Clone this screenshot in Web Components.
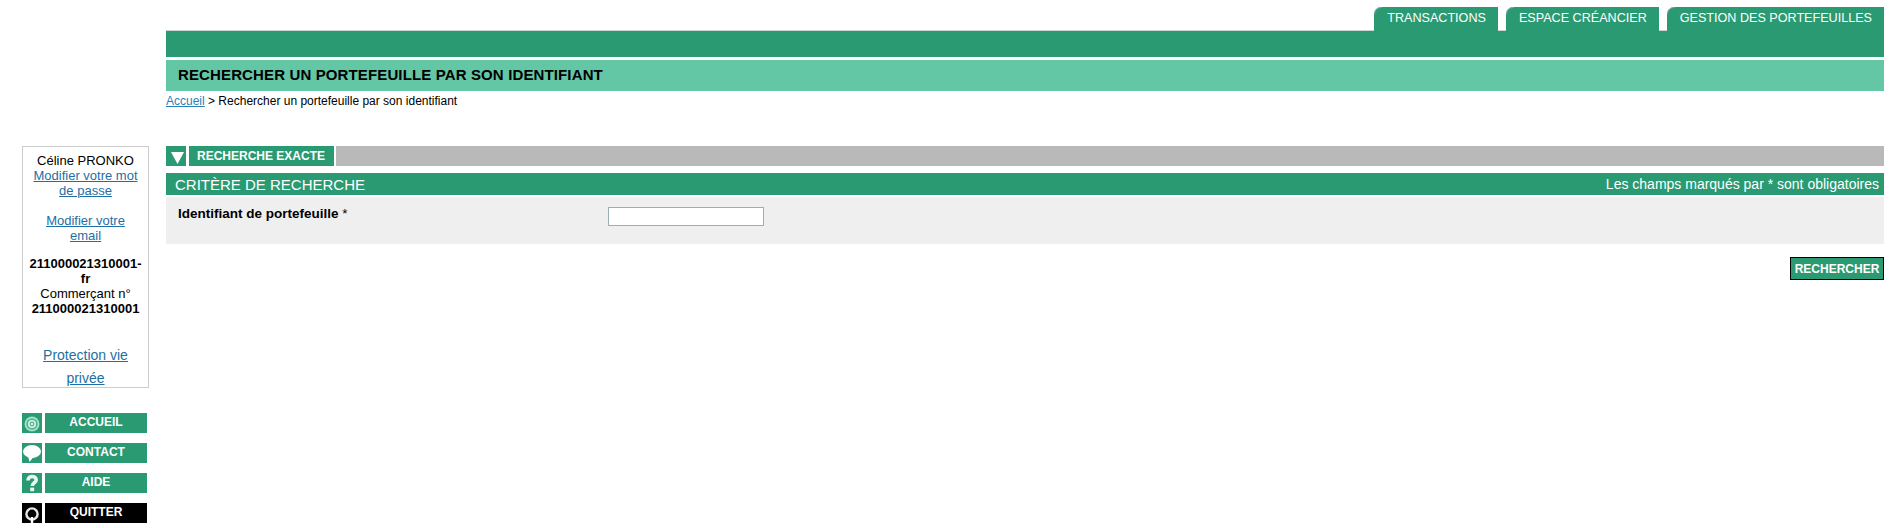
<!DOCTYPE html>
<html lang="fr">
<head>
<meta charset="utf-8">
<title>Rechercher un portefeuille</title>
<style>
  html, body { margin: 0; padding: 0; background: #fff; }
  body { font-family: "Liberation Sans", Arial, sans-serif; font-size: 12px; color: #000; }
</style>
</head>
<body>
<app-shell>
  <user-card slot="side"></user-card>
  <side-button slot="side" icon="target">ACCUEIL</side-button>
  <side-button slot="side" icon="bubble">CONTACT</side-button>
  <side-button slot="side" icon="help">AIDE</side-button>
  <side-button slot="side" icon="quit" dark>QUITTER</side-button>

  <top-tabs slot="head"></top-tabs>
  <page-title slot="head">RECHERCHER UN PORTEFEUILLE PAR SON IDENTIFIANT</page-title>

  <search-form></search-form>
</app-shell>

<script>
const GREEN = '#2a9a72';

class AppShell extends HTMLElement {
  constructor() {
    super();
    this.attachShadow({ mode: 'open' });
    this.shadowRoot.innerHTML = `
      <style>
        :host { display: grid; grid-template-columns: 166px 1718px; grid-template-rows: 146px auto; height: 528px; overflow: hidden; }
        .head { grid-column: 2; grid-row: 1; }
        .side { grid-column: 1; grid-row: 2; padding-left: 22px; display: flex; flex-direction: column; }
        .main { grid-column: 2; grid-row: 2; }
      </style>
      <div class="head"><slot name="head"></slot></div>
      <div class="side"><slot name="side"></slot></div>
      <div class="main"><slot></slot></div>
    `;
  }
}

class TopTabs extends HTMLElement {
  constructor() {
    super();
    this.attachShadow({ mode: 'open' });
    this.shadowRoot.innerHTML = `
      <style>
        :host { display: block; padding-top: 7px; }
        .tabs { display: flex; justify-content: flex-end; gap: 8px; height: 24px; margin-bottom: -1px; position: relative; }
        .tab {
          position: relative; background: ${GREEN}; color: #fff; border-top-left-radius: 8px;
          padding: 3px 12px 0 13px; font-size: 12.6px; line-height: 17px; white-space: nowrap;
        }
        .tab::before {
          content: ""; position: absolute; left: 0; top: 0; width: 8px; height: 7px;
          border-top: 1px solid #7d9fb8; border-left: 1px solid #7d9fb8; border-top-left-radius: 8px;
          box-sizing: border-box;
        }
        .bar { height: 27px; box-sizing: border-box; background: ${GREEN}; border-top: 1px solid #c9d6d2; }
      </style>
      <div class="tabs">
        <div class="tab">TRANSACTIONS</div>
        <div class="tab">ESPACE CRÉANCIER</div>
        <div class="tab">GESTION DES PORTEFEUILLES</div>
      </div>
      <div class="bar"></div>
    `;
  }
}

class PageTitle extends HTMLElement {
  constructor() {
    super();
    this.attachShadow({ mode: 'open' });
    this.shadowRoot.innerHTML = `
      <style>
        :host { display: block; margin-top: 3px; }
        h1 {
          margin: 0; height: 31px; line-height: 30px; padding-left: 12px;
          background: #63c7a5; font-size: 15px; font-weight: bold; letter-spacing: .13px;
        }
        nav { font-size: 12px; line-height: 15px; margin-top: 3px; }
        a { color: #2a7fb8; }
      </style>
      <h1><slot></slot></h1>
      <nav><a href="#">Accueil</a> &gt; Rechercher un portefeuille par son identifiant</nav>
    `;
  }
}

class UserCard extends HTMLElement {
  constructor() {
    super();
    this.attachShadow({ mode: 'open' });
    this.shadowRoot.innerHTML = `
      <style>
        :host {
          display: block; box-sizing: border-box; width: 127px; height: 242px;
          border: 1px solid #ccc; padding: 6px 0 0; text-align: center;
          font-size: 13px; line-height: 15px; overflow: hidden; white-space: nowrap;
        }
        a { color: #1d6fa5; }
        p { margin: 0 0 15px; }
        .mail { margin-bottom: 13px; }
        .id { margin-bottom: 28px; }
        .privacy { font-size: 14px; line-height: 23px; margin: 0; }
      </style>
      <p>Céline PRONKO<br><a href="#">Modifier votre mot<br>de passe</a></p>
      <p class="mail"><a href="#">Modifier votre<br>email</a></p>
      <p class="id"><b>211000021310001-<br>fr</b><br>Commerçant n°<br><b>211000021310001</b></p>
      <p class="privacy"><a href="#">Protection vie<br>privée</a></p>
    `;
  }
}

const ICONS = {
  target: `<circle cx="10" cy="11" r="7.5" fill="#9fe0c8"/><circle cx="10" cy="11" r="5.6" fill="#4fb391"/><circle cx="10" cy="11" r="4" fill="#d6f3e8"/><circle cx="10" cy="11" r="2.4" fill="#4fb391"/><circle cx="10" cy="11" r="1.2" fill="#d6f3e8"/>`,
  bubble: `<ellipse cx="10" cy="8.5" rx="9" ry="6.5" fill="#fff"/><path d="M6 13l1.5 6 4-5z" fill="#fff"/>`,
  help: `<path d="M6 7.5c0-3 2-4 4.2-4s4 1.4 4 3.4c0 2.8-4 3-4 6.1" fill="none" stroke="#e8f7f1" stroke-width="3.6"/><rect x="8.2" y="14.6" width="4" height="3.6" fill="#e8f7f1"/>`,
  quit: `<circle cx="10" cy="11" r="5.6" fill="none" stroke="#e6e6e6" stroke-width="2.4"/><rect x="8.8" y="14" width="2.4" height="6" fill="#fff"/>`
};

class SideButton extends HTMLElement {
  constructor() {
    super();
    this.attachShadow({ mode: 'open' });
  }

  connectedCallback() {
    const bg = this.hasAttribute('dark') ? '#000' : GREEN;
    this.shadowRoot.innerHTML = `
      <style>
        :host { display: flex; gap: 3px; width: 125px; height: 20px; margin-bottom: 10px; }
        :host(:first-of-type) { margin-top: 25px; }
        svg { width: 20px; height: 20px; background: ${bg}; display: block; flex: none; }
        .label {
          flex: 1; background: ${bg}; color: #fff; text-align: center;
          font-size: 12px; font-weight: bold; line-height: 18px;
        }
      </style>
      <svg viewBox="0 0 20 20">${ICONS[this.getAttribute('icon')]}</svg>
      <div class="label"><slot></slot></div>
    `;
  }
}

class SearchForm extends HTMLElement {
  constructor() {
    super();
    this.attachShadow({ mode: 'open' });
    this.shadowRoot.innerHTML = `
      <style>
        :host { display: block; }
        .tabrow { display: flex; height: 20px; }
        .arrow { width: 20px; background: ${GREEN}; display: block; flex: none; margin-right: 3px; }
        .exact {
          box-sizing: border-box; width: 145px; background: ${GREEN}; color: #fff; font-size: 12px; font-weight: bold;
          line-height: 20px; padding: 0 8px; white-space: nowrap; margin-right: 2px;
        }
        .fill { flex: 1; background: #b9b9b9; }
        .crit {
          display: flex; justify-content: space-between; align-items: center;
          margin-top: 7px; height: 22px; padding: 0 5px 0 9px;
          background: ${GREEN}; color: #fff;
        }
        .crit h2 { margin: 0; font-size: 15px; font-weight: normal; }
        .crit span { font-size: 14px; }
        .panel {
          display: flex; align-items: flex-start; height: 47px; box-sizing: border-box;
          margin-top: 2px; background: #efefef; padding: 10px 0 0 12px;
        }
        label { width: 430px; font-size: 13.5px; line-height: 14px; }
        label b { font-weight: bold; }
        input {
          display: block; box-sizing: border-box; width: 156px; height: 19px; margin: 0;
          border: 1px solid #9ab0b8; background: #fff; padding: 0;
        }
        .actions { display: flex; justify-content: flex-end; margin-top: 13px; }
        button {
          box-sizing: border-box; width: 94px; height: 23px; padding: 0; background: ${GREEN}; color: #fff;
          border: 1px solid #000; font: bold 12px "Liberation Sans", Arial, sans-serif;
        }
      </style>
      <div class="tabrow">
        <svg class="arrow" viewBox="0 0 20 20"><path d="M5 6h13l-6.500 12z" fill="#fff"/></svg>
        <div class="exact">RECHERCHE EXACTE</div>
        <div class="fill"></div>
      </div>
      <div class="crit"><h2>CRITÈRE DE RECHERCHE</h2><span>Les champs marqués par * sont obligatoires</span></div>
      <div class="panel">
        <label><b>Identifiant de portefeuille</b> *</label>
        <input type="text">
      </div>
      <div class="actions"><button type="button">RECHERCHER</button></div>
    `;
  }
}

customElements.define('app-shell', AppShell);
customElements.define('top-tabs', TopTabs);
customElements.define('page-title', PageTitle);
customElements.define('user-card', UserCard);
customElements.define('side-button', SideButton);
customElements.define('search-form', SearchForm);
</script>
</body>
</html>
